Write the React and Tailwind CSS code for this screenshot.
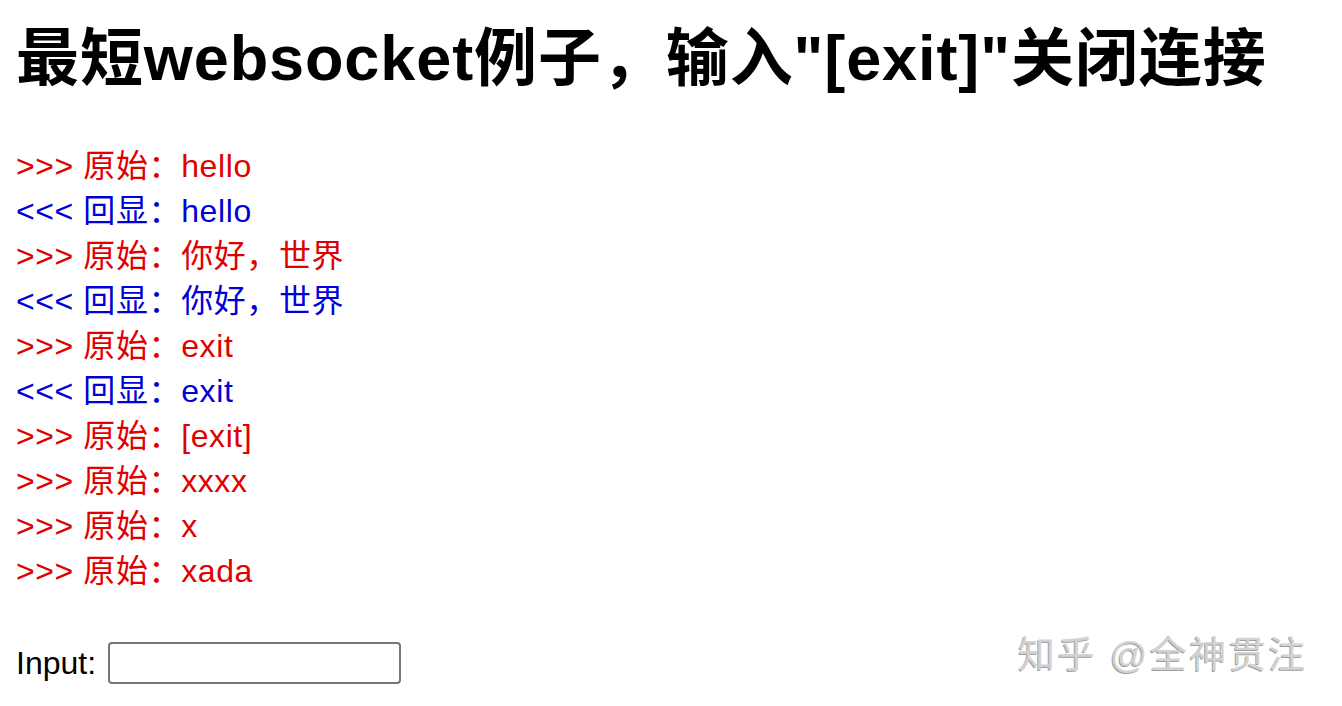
import React from 'react';

const lines = [
  { dir: 'out', label: '原始', text: 'hello' },
  { dir: 'in', label: '回显', text: 'hello' },
  { dir: 'out', label: '原始', text: '你好，世界' },
  { dir: 'in', label: '回显', text: '你好，世界' },
  { dir: 'out', label: '原始', text: 'exit' },
  { dir: 'in', label: '回显', text: 'exit' },
  { dir: 'out', label: '原始', text: '[exit]' },
  { dir: 'out', label: '原始', text: 'xxxx' },
  { dir: 'out', label: '原始', text: 'x' },
  { dir: 'out', label: '原始', text: 'xada' },
];

const font = { fontFamily: '"Liberation Sans", "Noto Sans CJK SC", sans-serif' };

export default function App() {
  return (
    <div className="relative w-[1342px] h-[706px] bg-white overflow-hidden px-4" style={font}>
      <h1 className="text-[63px] font-bold leading-[76px] pt-[20px] text-black tracking-[0.9px]">
        最短websocket例子，输入"[exit]"关闭连接
      </h1>

      <div className="mt-[48px]">
        {lines.map((l, i) => (
          <div
            key={i}
            className={`text-[32px] leading-[45px] whitespace-pre tracking-[0.6px] ${l.dir === 'out' ? 'text-[#e00000]' : 'text-[#0000d8]'}`}
          >
            {l.dir === 'out' ? '>>> ' : '<<< '}
            {l.label}：{l.text}
          </div>
        ))}
      </div>

      <div className="flex items-center gap-[12px] mt-[48px]">
        <span className="text-[32px] text-black leading-[42px]">Input:</span>
        <input
          type="text"
          className="w-[293px] h-[42px] border-2 border-[#767676] rounded-[4px] bg-white outline-none"
        />
      </div>

      <div
        className="absolute left-[1018px] top-[628px] text-[37px] text-[#d2d2d2] tracking-[2.5px]"
        style={{ ...font, textShadow: '-1px 1px 0 #a0a0a0' }}
      >
        知乎 @全神贯注
      </div>
    </div>
  );
}
